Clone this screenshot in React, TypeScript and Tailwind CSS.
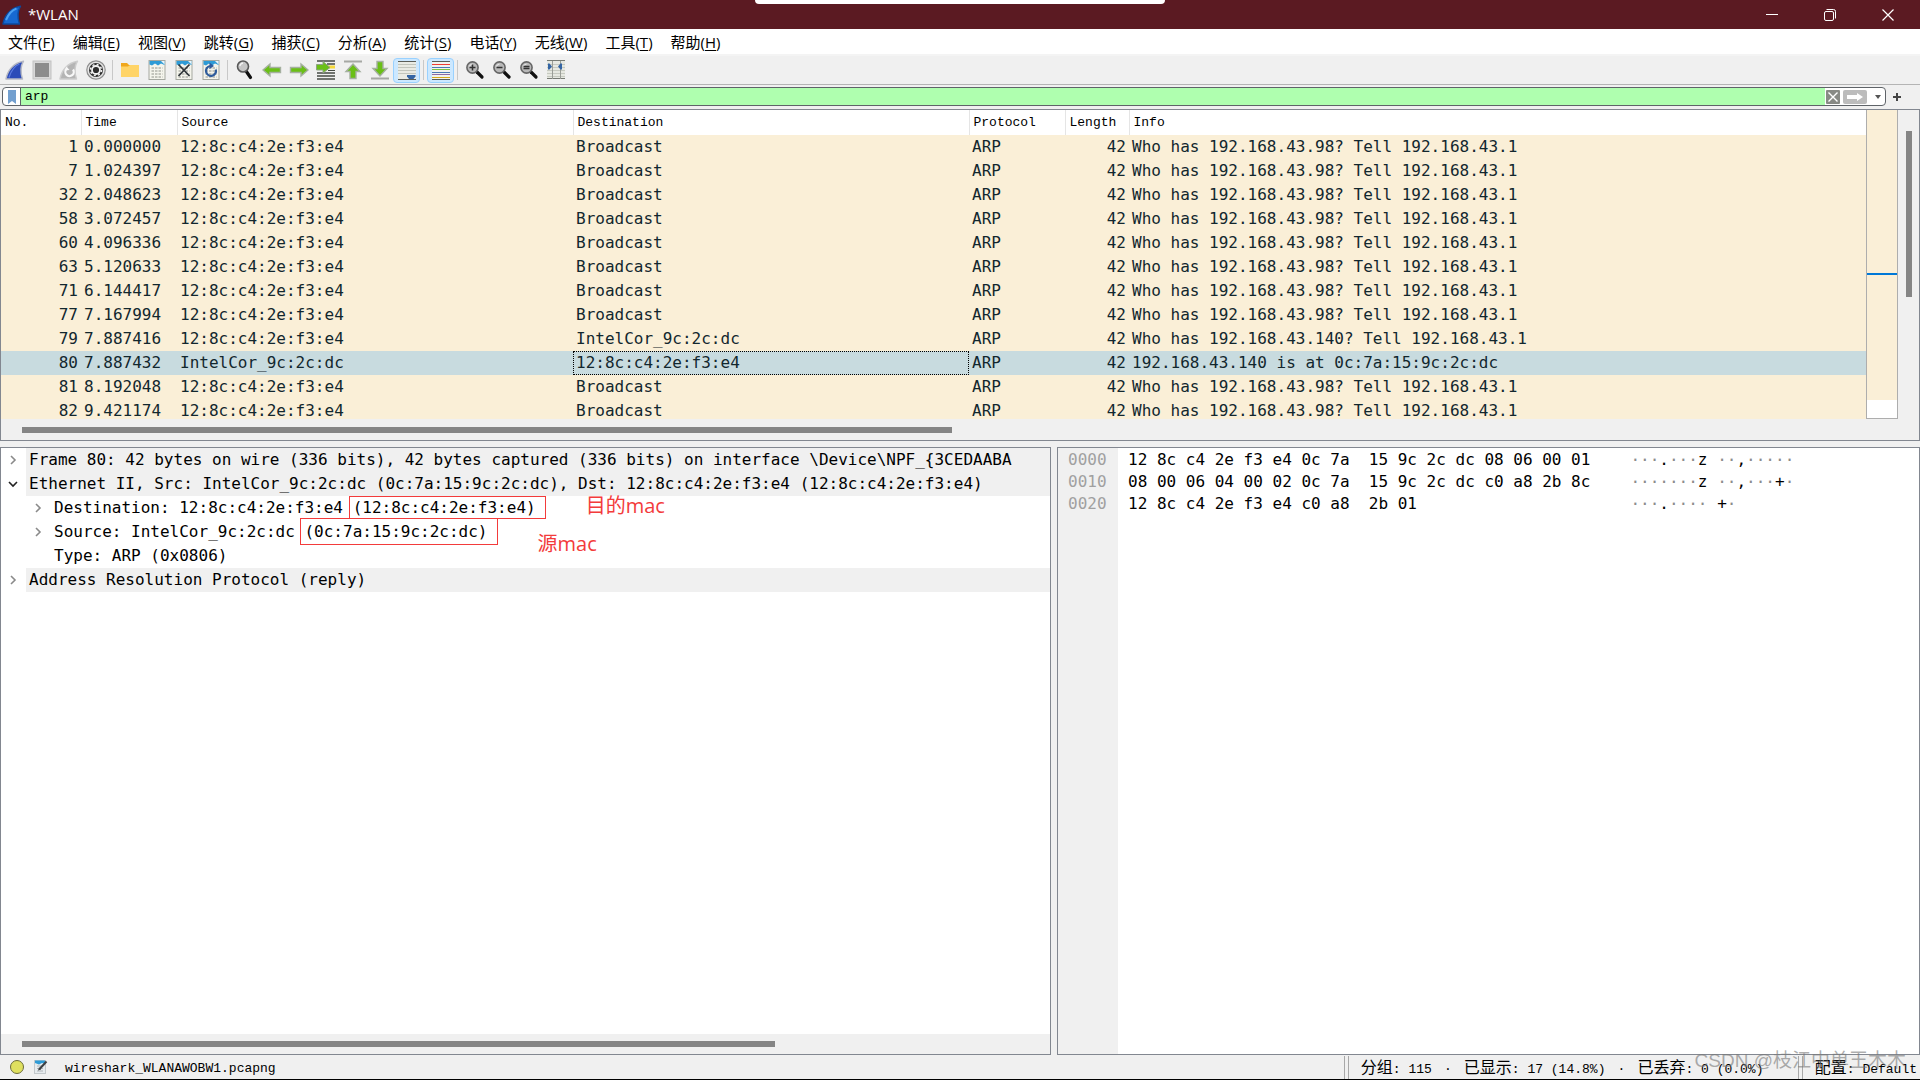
import type { ReactNode } from 'react';

interface Packet {
  no: number;
  time: string;
  source: string;
  destination: string;
  info: string;
  selected?: boolean;
}

const PHONE = '12:8c:c4:2e:f3:e4';
const LAPTOP = 'IntelCor_9c:2c:dc';
const WHO_HAS = 'Who has 192.168.43.98? Tell 192.168.43.1';

const packets: Packet[] = [
  { no: 1, time: '0.000000', source: PHONE, destination: 'Broadcast', info: WHO_HAS },
  { no: 7, time: '1.024397', source: PHONE, destination: 'Broadcast', info: WHO_HAS },
  { no: 32, time: '2.048623', source: PHONE, destination: 'Broadcast', info: WHO_HAS },
  { no: 58, time: '3.072457', source: PHONE, destination: 'Broadcast', info: WHO_HAS },
  { no: 60, time: '4.096336', source: PHONE, destination: 'Broadcast', info: WHO_HAS },
  { no: 63, time: '5.120633', source: PHONE, destination: 'Broadcast', info: WHO_HAS },
  { no: 71, time: '6.144417', source: PHONE, destination: 'Broadcast', info: WHO_HAS },
  { no: 77, time: '7.167994', source: PHONE, destination: 'Broadcast', info: WHO_HAS },
  { no: 79, time: '7.887416', source: PHONE, destination: LAPTOP, info: 'Who has 192.168.43.140? Tell 192.168.43.1' },
  { no: 80, time: '7.887432', source: LAPTOP, destination: PHONE, info: '192.168.43.140 is at 0c:7a:15:9c:2c:dc', selected: true },
  { no: 81, time: '8.192048', source: PHONE, destination: 'Broadcast', info: WHO_HAS },
  { no: 82, time: '9.421174', source: PHONE, destination: 'Broadcast', info: WHO_HAS },
];

const menus = [
  ['文件', 'F'],
  ['编辑', 'E'],
  ['视图', 'V'],
  ['跳转', 'G'],
  ['捕获', 'C'],
  ['分析', 'A'],
  ['统计', 'S'],
  ['电话', 'Y'],
  ['无线', 'W'],
  ['工具', 'T'],
  ['帮助', 'H'],
];

const hexRows = [
  { offset: '0000', hex: '12 8c c4 2e f3 e4 0c 7a  15 9c 2c dc 08 06 00 01', ascii: '···.···z ··,·····' },
  { offset: '0010', hex: '08 00 06 04 00 02 0c 7a  15 9c 2c dc c0 a8 2b 8c', ascii: '·······z ··,···+·' },
  { offset: '0020', hex: '12 8c c4 2e f3 e4 c0 a8  2b 01', ascii: '···.···· +·' },
];

function Icon({ children }: { children: ReactNode }) {
  return (
    <svg viewBox="0 0 20 20" className="w-5 h-5" aria-hidden="true">
      {children}
    </svg>
  );
}

function Fin({ fill, stroke }: { fill: string; stroke: string }) {
  return (
    <path
      d="M1 19C2.500 11 8 3 18.500 1.200C15.500 6 15.500 13 17.500 19Z"
      fill={fill}
      stroke={stroke}
      strokeWidth="1.400"
      strokeLinejoin="round"
    />
  );
}

// Sheet with a blue torn top, shared by the save/close/reload file icons
function Sheet({ children }: { children: ReactNode }) {
  return (
    <Icon>
      <rect x="2" y="0.500" width="16" height="19" fill="#f4f4ec" stroke="#a5a8a0" />
      <path d="M2.500 1H17.500V5L14 3.500L11 5.500L8 3.500L5 5.500L2.500 4.500Z" fill="#2e9bd6" />
      <path d="M14 1H17.500V4.500Z" fill="#e8f4fa" />
      {children}
    </Icon>
  );
}

function Digits() {
  return (
    <g stroke="#b2b4ac" strokeWidth="1.500" strokeDasharray="2.500 1">
      <path d="M4.500 8H15.500M4.500 11H15.500M4.500 14H15.500M4.500 17H15.500" />
    </g>
  );
}

function Magnifier({ children }: { children?: ReactNode }) {
  return (
    <Icon>
      <path d="M12 12L17 17" stroke="#111" strokeWidth="3.200" strokeLinecap="round" />
      <circle cx="7.500" cy="7.500" r="5.600" fill="#b9b9b9" stroke="#666" strokeWidth="1.600" />
      <path d="M4.300 6.500A4 4 0 0 1 7.500 4" fill="none" stroke="#e8e8e8" strokeWidth="1.200" />
      {children}
    </Icon>
  );
}

const ARROW = 'M1 10L8 4V7.500H18.500V12.500H8V16Z';
const UP_ARROW = 'M10 4L17 11.500H13V18.500H7V11.500H3Z';

const toolbar: { label: string; icon: ReactNode; on?: boolean; gap?: boolean }[] = [
  {
    label: 'Start capture',
    icon: (
      <Icon>
        <Fin fill="#2b4bb8" stroke="#b5b8c4" />
        <path d="M4 17.500C6 11 9.500 6 14.500 4" fill="none" stroke="#5c7be0" strokeWidth="1.200" />
      </Icon>
    ),
  },
  {
    label: 'Stop capture',
    icon: (
      <Icon>
        <rect x="1" y="1" width="18" height="18" fill="#d8d8d8" stroke="#c2c2c2" />
        <rect x="3" y="3" width="14" height="14" fill="#8c8c8c" />
      </Icon>
    ),
  },
  {
    label: 'Restart capture',
    icon: (
      <Icon>
        <Fin fill="#b4b4b4" stroke="#cccccc" />
        <path d="M7.500 9A4.200 4.200 0 1 0 14 9.500" fill="none" stroke="#f7f7f7" strokeWidth="2.200" />
        <path d="M5.500 10.500L7.500 6.500L10.500 10Z" fill="#f7f7f7" />
      </Icon>
    ),
  },
  {
    label: 'Capture options',
    gap: true,
    icon: (
      <Icon>
        <circle cx="10" cy="10" r="9.200" fill="#e4e4e4" stroke="#8e8e8e" strokeWidth="1.200" />
        <circle cx="10" cy="10" r="7" fill="#2e2e2e" />
        <circle cx="10" cy="10" r="4" fill="none" stroke="#f2f2f2" strokeWidth="1.800" />
        <circle cx="10" cy="10" r="5.500" fill="none" stroke="#f2f2f2" strokeWidth="1.500" strokeDasharray="2 2.320" />
        <circle cx="10" cy="10" r="2.200" fill="#2e2e2e" />
      </Icon>
    ),
  },
  {
    label: 'Open file',
    icon: (
      <Icon>
        <path d="M1 3H7L9 5H19V9H1Z" fill="#f0a71c" />
        <path d="M1 6.500H8L10 5H19V17H1Z" fill="#ffd467" />
      </Icon>
    ),
  },
  { label: 'Save file', icon: <Sheet><Digits /></Sheet> },
  {
    label: 'Close file',
    icon: (
      <Sheet>
        <Digits />
        <path d="M4.500 4.500L15.500 16M15.500 4.500L4.500 16" stroke="#30363a" strokeWidth="1.800" />
      </Sheet>
    ),
  },
  {
    label: 'Reload file',
    gap: true,
    icon: (
      <Sheet>
        <Digits />
        <path d="M14.800 9.500A5 5 0 1 1 9 6" fill="none" stroke="#2f5c9c" strokeWidth="2.200" />
        <path d="M8.500 2.500L13 6L8.500 9Z" fill="#2f5c9c" />
      </Sheet>
    ),
  },
  {
    label: 'Find packet',
    icon: (
      <Icon>
        <path d="M11 11L15.500 17.500" stroke="#111" strokeWidth="3.200" strokeLinecap="round" />
        <circle cx="8" cy="6.500" r="5.500" fill="#c6c6c6" stroke="#595959" strokeWidth="1.600" />
        <path d="M4.800 6A4 4 0 0 1 8 3" fill="none" stroke="#f4f4f4" strokeWidth="1.400" />
      </Icon>
    ),
  },
  {
    label: 'Previous packet',
    icon: <Icon><path d={ARROW} fill="#6abf16" stroke="#a5b0a0" strokeWidth="1.400" /></Icon>,
  },
  {
    label: 'Next packet',
    icon: <Icon><path d={ARROW} transform="rotate(180 10 10)" fill="#6abf16" stroke="#a5b0a0" strokeWidth="1.400" /></Icon>,
  },
  {
    label: 'Go to packet',
    icon: (
      <Icon>
        <path d="M1 1H19M11 4H19M1 13H19M1 16H19M1 19H19" stroke="#454a44" strokeWidth="1.300" />
        <path d="M12 7H19" stroke="#f5d83a" strokeWidth="3" />
        <path d="M12 10.500H19" stroke="#454a44" />
        <path d="M0.500 4.500H7V1.500L14 7.500L7 13V10H0.500Z" fill="#6abf16" stroke="#8ea384" />
      </Icon>
    ),
  },
  {
    label: 'First packet',
    icon: (
      <Icon>
        <path d="M1 1.500H19" stroke="#a6a8a4" strokeWidth="2" />
        <path d={UP_ARROW} fill="#6abf16" stroke="#a5b0a0" strokeWidth="1.400" />
      </Icon>
    ),
  },
  {
    label: 'Last packet',
    icon: (
      <Icon>
        <path d="M1 18.500H19" stroke="#a6a8a4" strokeWidth="2" />
        <path d={UP_ARROW} transform="rotate(180 10 10)" fill="#6abf16" stroke="#a5b0a0" strokeWidth="1.400" />
      </Icon>
    ),
  },
  {
    label: 'Auto scroll',
    on: true,
    gap: true,
    icon: (
      <Icon>
        <rect x="1" y="1" width="18" height="18" fill="#e9ebe4" />
        <path d="M1 4.500H19M1 7.500H19M1 10.500H19M1 13.500H19" stroke="#c2c6bd" />
        <path d="M1 1.500H19M1 19.500H19" stroke="#5a5e58" />
        <path d="M10 15H18.500V16.500L16.500 19H12L10 16.500Z" fill="#3465a4" />
      </Icon>
    ),
  },
  {
    label: 'Colorize',
    on: true,
    gap: true,
    icon: (
      <Icon>
        <rect x="1" y="1" width="18" height="18" fill="#f2f2ee" />
        <path d="M1 1.500H19M1 19.500H19" stroke="#5a5e58" />
        <path d="M1 4.500H19" stroke="#ef3b34" />
        <path d="M1 7.500H19" stroke="#4a78b5" />
        <path d="M1 9.500H19" stroke="#7cc142" />
        <path d="M1 12.500H19" stroke="#4a78b5" />
        <path d="M1 14.500H19" stroke="#8d6aa5" />
        <path d="M1 17.500H19" stroke="#d6a919" />
      </Icon>
    ),
  },
  {
    label: 'Zoom in',
    icon: <Magnifier><path d="M4.500 7.500H10.500M7.500 4.500V10.500" stroke="#333" strokeWidth="1.500" /></Magnifier>,
  },
  {
    label: 'Zoom out',
    icon: <Magnifier><path d="M4.500 7.500H10.500" stroke="#333" strokeWidth="1.500" /></Magnifier>,
  },
  {
    label: 'Normal size',
    icon: <Magnifier><path d="M4.500 6.500H10.500M4.500 8.500H10.500" stroke="#333" strokeWidth="1.400" /></Magnifier>,
  },
  {
    label: 'Resize columns',
    icon: (
      <Icon>
        <rect x="1" y="1" width="18" height="18" fill="#e6e8e1" />
        <path d="M1 4.500H19M1 7.500H19M1 10.500H19M1 13.500H19M1 16.500H19" stroke="#c6c9c0" />
        <path d="M1 0.500H19M1 18.500H19" stroke="#777b74" />
        <path d="M6.500 1V19M14.500 1V19" stroke="#9a9d97" />
        <path d="M2 3.500H3.500L6 6.500L3.500 9.500H2ZM16 3.500H14.500L12 6.500L14.500 9.500H16Z" fill="#3465a4" />
      </Icon>
    ),
  },
];

function TitleBar() {
  return (
    <header className="relative flex h-[29px] items-center bg-[#5b1a22] pl-[2px] pr-[3px] text-white">
      <svg viewBox="0 0 20 20" className="w-5 h-5" aria-hidden="true">
        <Fin fill="#1769d2" stroke="#0c4aa0" />
        <path d="M4 15C6.500 9 10 5 14.500 3.500" fill="none" stroke="#4ba0f2" strokeWidth="2" />
      </svg>
      <h1 className="ml-[6px] font-['Open_Sans',sans-serif] text-[15px]">*WLAN</h1>
      <div className="ml-auto flex">
        <button aria-label="Minimize" className="flex h-[29px] w-[58px] items-center justify-center">
          <svg viewBox="0 0 12 12" className="h-3 w-3"><path d="M0 5.500H12" stroke="#fff" /></svg>
        </button>
        <button aria-label="Restore" className="flex h-[29px] w-[58px] items-center justify-center">
          <svg viewBox="0 0 12 12" className="h-3 w-3" fill="none" stroke="#fff">
            <rect x="0.500" y="2.500" width="9" height="9" rx="1.500" />
            <path d="M2.500 0.500H9.500Q11.500 0.500 11.500 2.500V9.500" />
          </svg>
        </button>
        <button aria-label="Close" className="flex h-[29px] w-[58px] items-center justify-center">
          <svg viewBox="0 0 12 12" className="h-3 w-3"><path d="M0.500 0.500L11.500 11.500M11.500 0.500L0.500 11.500" stroke="#fff" strokeWidth="1.200" /></svg>
        </button>
      </div>
      {/* Pull-down handle hanging from the top screen edge */}
      <div className="absolute left-1/2 top-0 h-1 w-[410px] -translate-x-1/2 rounded-b-md bg-white" />
    </header>
  );
}

function FilterBar() {
  return (
    <form className="flex items-center bg-[#f0f0f0] py-[2px] pl-[2px] pr-[18px]">
      <div className="flex h-[19px] flex-1 items-center overflow-hidden rounded-sm border border-[#5f6368] bg-white">
        <button type="button" aria-label="Bookmarks" className="flex h-full w-[18px] items-center justify-center border-r border-[#5f6368]">
          <svg viewBox="0 0 8 14" className="h-[14px] w-2"><path d="M0 0H8V14L4 11L0 14Z" fill="#729fcf" /></svg>
        </button>
        <input
          aria-label="Display filter"
          defaultValue="arp"
          className="h-full min-w-0 flex-1 bg-[#afffaf] pl-1 font-['Liberation_Mono',monospace] text-[13px] text-black outline-none"
        />
        <button type="button" aria-label="Clear filter" className="mx-px">
          <svg viewBox="0 0 14 14" className="h-[14px] w-[14px]">
            <rect width="14" height="14" rx="1" fill="#888a85" />
            <path d="M2.500 2.500L11.500 11.500M11.500 2.500L2.500 11.500" stroke="#fff" strokeWidth="1.400" />
          </svg>
        </button>
        <button type="button" aria-label="Apply filter" className="ml-[2px]">
          <svg viewBox="0 0 24 14" className="h-[14px] w-6">
            <rect width="24" height="14" rx="2" fill="#bcbcbc" />
            <path d="M4 5H14V3L20 7L14 11V9H4Z" fill="#fff" />
          </svg>
        </button>
        <button type="button" aria-label="Recent filters" className="ml-[7px] mr-[3px]">
          <svg viewBox="0 0 8 14" className="h-[14px] w-2"><path d="M1 5H7L4 9Z" fill="#555" /></svg>
        </button>
      </div>
      <button type="button" aria-label="Add filter button" className="ml-[6px]">
        <svg viewBox="0 0 10 10" className="h-[10px] w-[10px]"><path d="M1 5H9M5 1V9" stroke="#444" strokeWidth="2" /></svg>
      </button>
    </form>
  );
}

function PacketList() {
  const headers = ['No.', 'Time', 'Source', 'Destination', 'Protocol', 'Length', 'Info'];
  return (
    <section className="mt-px border border-[#828790]">
      <div className="flex h-[309px]">
        <div className="min-w-0 flex-1 overflow-hidden">
          <table className="w-full table-fixed border-collapse">
            <colgroup>
              <col className="w-20" />
              <col className="w-24" />
              <col className="w-[396px]" />
              <col className="w-[396px]" />
              <col className="w-24" />
              <col className="w-16" />
              <col />
            </colgroup>
            <thead className="bg-white font-['Liberation_Mono',monospace] text-[13px] text-black">
              <tr className="h-[25px]">
                {headers.map((h) => (
                  <th key={h} className="border-r border-[#e5e5e5] p-0 pl-1 text-left font-normal last:border-r-0">{h}</th>
                ))}
              </tr>
            </thead>
            <tbody className="font-['DejaVu_Sans_Mono',monospace] text-base text-[#12272e]">
              {packets.map((p) => (
                <tr key={p.no} className={p.selected ? 'h-6 bg-[#c8dbdf]' : 'h-6 bg-[#faefd7]'}>
                  <td className="p-0 pr-[3px] text-right leading-6">{p.no}</td>
                  <td className="p-0 pl-[3px] leading-6">{p.time}</td>
                  <td className="p-0 pl-[3px] leading-6">{p.source}</td>
                  <td className="p-0 leading-6">
                    <div className={p.selected ? 'h-6 border border-dotted border-black pl-[2px] leading-[22px]' : 'pl-[3px]'}>
                      {p.destination}
                    </div>
                  </td>
                  <td className="p-0 pl-[3px] leading-6">ARP</td>
                  <td className="p-0 pr-[3px] text-right leading-6">42</td>
                  <td className="whitespace-nowrap p-0 pl-[3px] leading-6">{p.info}</td>
                </tr>
              ))}
            </tbody>
          </table>
        </div>
        {/* Minimap of the colour rules */}
        <div className="relative w-8 border border-t-0 border-[#adadad] bg-white pb-[18px]">
          <div className="h-full bg-[#faefd7]" />
          <div className="absolute inset-x-0 top-[163px] h-[2px] bg-[#0078d7]" />
        </div>
        <div className="ml-px w-5 bg-[#f0f0f0] pt-[21px]">
          <div className="ml-[7px] h-[166px] w-[6px] bg-[#858585]" />
        </div>
      </div>
      <div className="h-[21px] bg-[#f0f0f0] pl-[21px] pt-2">
        <div className="h-[6px] w-[930px] bg-[#858585]" />
      </div>
    </section>
  );
}

function Chevron({ open }: { open?: boolean }) {
  return (
    <button aria-label={open ? 'Collapse' : 'Expand'} className="flex h-6 w-[25px] shrink-0 items-center justify-center pr-[2px]">
      <svg viewBox="0 0 10 10" className="h-[10px] w-[10px]" fill="none" strokeWidth="1.600">
        {open ? <path d="M1 3L5 7L9 3" stroke="#222" /> : <path d="M3 1L7 5L3 9" stroke="#8a8a8a" />}
      </svg>
    </button>
  );
}

function Marked({ children, note, boxClass, noteClass }: { children: ReactNode; note: string; boxClass: string; noteClass: string }) {
  return (
    <span className="relative">
      {children}
      <span className={`absolute border border-[#f33b3b] ${boxClass}`} />
      <span className={`absolute left-full font-['Open_Sans','Noto_Sans_CJK_SC',sans-serif] text-xl leading-6 text-[#f33b3b] ${noteClass}`}>
        {note}
      </span>
    </span>
  );
}

function PacketDetails() {
  return (
    <section className="flex min-w-0 flex-col overflow-hidden border border-[#828790] bg-white">
      <ul className="flex-1 whitespace-pre font-['DejaVu_Sans_Mono',monospace] text-base leading-6 text-black">
        <li className="flex">
          <Chevron />
          <span className="flex-1 bg-[#f0f0f0] pl-[3px]">
            {'Frame 80: 42 bytes on wire (336 bits), 42 bytes captured (336 bits) on interface \\Device\\NPF_{3CEDAABA'}
          </span>
        </li>
        <li>
          <div className="flex">
            <Chevron open />
            <span className="flex-1 bg-[#f0f0f0] pl-[3px]">
              Ethernet II, Src: IntelCor_9c:2c:dc (0c:7a:15:9c:2c:dc), Dst: 12:8c:c4:2e:f3:e4 (12:8c:c4:2e:f3:e4)
            </span>
          </div>
          <ul className="pl-[25px]">
            <li className="flex">
              <Chevron />
              <span className="pl-[3px]">
                Destination: 12:8c:c4:2e:f3:e4{' '}
                <Marked note="目的mac" boxClass="-left-1 -right-[10px] -top-[2px] -bottom-[2px]" noteClass="ml-[50px] -top-1">
                  (12:8c:c4:2e:f3:e4)
                </Marked>
              </span>
            </li>
            <li className="flex">
              <Chevron />
              <span className="pl-[3px]">
                Source: IntelCor_9c:2c:dc{' '}
                <Marked note="源mac" boxClass="-left-1 -right-[10px] -top-1 -bottom-1" noteClass="ml-[50px] top-[10px]">
                  (0c:7a:15:9c:2c:dc)
                </Marked>
              </span>
            </li>
            <li className="pl-7">Type: ARP (0x0806)</li>
          </ul>
        </li>
        <li className="flex">
          <Chevron />
          <span className="flex-1 bg-[#f0f0f0] pl-[3px]">Address Resolution Protocol (reply)</span>
        </li>
      </ul>
      <div className="h-5 bg-[#f0f0f0] pl-[21px] pt-[7px]">
        <div className="h-[6px] w-[753px] bg-[#858585]" />
      </div>
    </section>
  );
}

function PacketBytes() {
  return (
    <section className="min-w-0 overflow-hidden border border-[#828790] bg-[linear-gradient(to_right,#f0f0f0_60px,#ffffff_60px)]">
      <table className="mt-px whitespace-pre font-['DejaVu_Sans_Mono',monospace] text-base leading-[22px] text-black">
        <tbody>
          {hexRows.map((row) => (
            <tr key={row.offset}>
              <th scope="row" className="w-[70px] p-0 pl-[10px] text-left font-normal text-[#a0a0a0]">{row.offset}</th>
              <td className="p-0 pr-10">{row.hex}</td>
              <td className="p-0">
                {row.ascii.split('').map((c, i) => (
                  <span key={i} className={c === '·' ? 'text-[#8c8c8c]' : ''}>{c}</span>
                ))}
              </td>
            </tr>
          ))}
        </tbody>
      </table>
    </section>
  );
}

function Grip() {
  return <span className="h-[23px] w-[5px] border-x border-[#a8a8a8]" />;
}

function Zh({ children }: { children: ReactNode }) {
  return <span className="text-base leading-5">{children}</span>;
}

function Dot() {
  return <span className="inline-block w-8 text-center">·</span>;
}

function StatusBar() {
  return (
    <footer className="relative flex h-[25px] items-center whitespace-pre border-b border-black bg-[#f0f0f0] pl-[10px] font-['Liberation_Mono','Noto_Sans_CJK_SC',monospace] text-[13px] leading-5 text-black">
      <button aria-label="Expert information" className="h-[14px] w-[14px] rounded-full border border-[#6b6b3a] bg-[#dfe05f]" />
      <button aria-label="Capture comments" className="ml-[10px]">
        <svg viewBox="0 0 14 14" className="h-[14px] w-[14px]">
          <rect x="0.500" y="0.500" width="11" height="13" fill="#e6ebee" stroke="#c3c8cb" />
          <path d="M1 0.500H11V4L8 3L5 4.500L1 3Z" fill="#2e9bd6" />
          <path d="M3 6H9M3 8.500H9M3 11H9" stroke="#b0b4b8" />
          <path d="M5.500 9L12.500 1.500" stroke="#3b3f42" strokeWidth="2" />
          <path d="M4 10.500L5 7.500L7 9.500Z" fill="#3b3f42" />
        </svg>
      </button>
      <span className="ml-[17px] pt-1">wireshark_WLANAWOBW1.pcapng</span>
      <div className="ml-auto flex items-center">
        <Grip />
        <span className="ml-3 w-[437px] pt-1">
          <Zh>分组</Zh>: 115<Dot /><Zh>已显示</Zh>: 17 (14.8%)<Dot /><Zh>已丢弃</Zh>: 0 (0.0%)
        </span>
        <Grip />
        <span className="ml-3 pr-[3px] pt-1"><Zh>配置</Zh>: Default</span>
      </div>
      <span className="pointer-events-none absolute -top-[6px] right-[14px] font-['Liberation_Sans','Noto_Sans_CJK_SC',sans-serif] text-[19px] leading-6 text-[#777777]/60">
        CSDN @枝江中单王木木
      </span>
    </footer>
  );
}

export default function App() {
  return (
    <div className="flex min-h-screen flex-col overflow-hidden bg-[#f0f0f0]">
      <TitleBar />
      <nav className="flex h-[25px] items-center gap-[2px] bg-white font-['Open_Sans','Noto_Sans_CJK_SC',sans-serif] text-[15px] text-black">
        {menus.map(([name, key]) => (
          <button key={key} className="px-2 leading-6">
            {name}(<span className="underline underline-offset-2">{key}</span>)
          </button>
        ))}
      </nav>
      <div className="flex h-[31px] items-center border-b border-t-2 border-b-[#b4b4b4] border-t-[#f4f4f4] pl-px">
        {toolbar.map((t) => (
          <div key={t.label} className="flex items-center">
            <button
              aria-label={t.label}
              className={
                t.on
                  ? 'flex h-[25px] w-[27px] items-center justify-center rounded-sm border border-[#99d1ff] bg-[#cce8ff]'
                  : 'flex h-[25px] w-[27px] items-center justify-center'
              }
            >
              {t.icon}
            </button>
            {t.gap && <span className="mx-[3px] h-5 w-px bg-[#c8c8c8]" />}
          </div>
        ))}
      </div>
      <FilterBar />
      <PacketList />
      <main className="mt-[6px] grid flex-1 grid-cols-[1051fr_863fr] gap-[6px]">
        <PacketDetails />
        <PacketBytes />
      </main>
      <StatusBar />
    </div>
  );
}
